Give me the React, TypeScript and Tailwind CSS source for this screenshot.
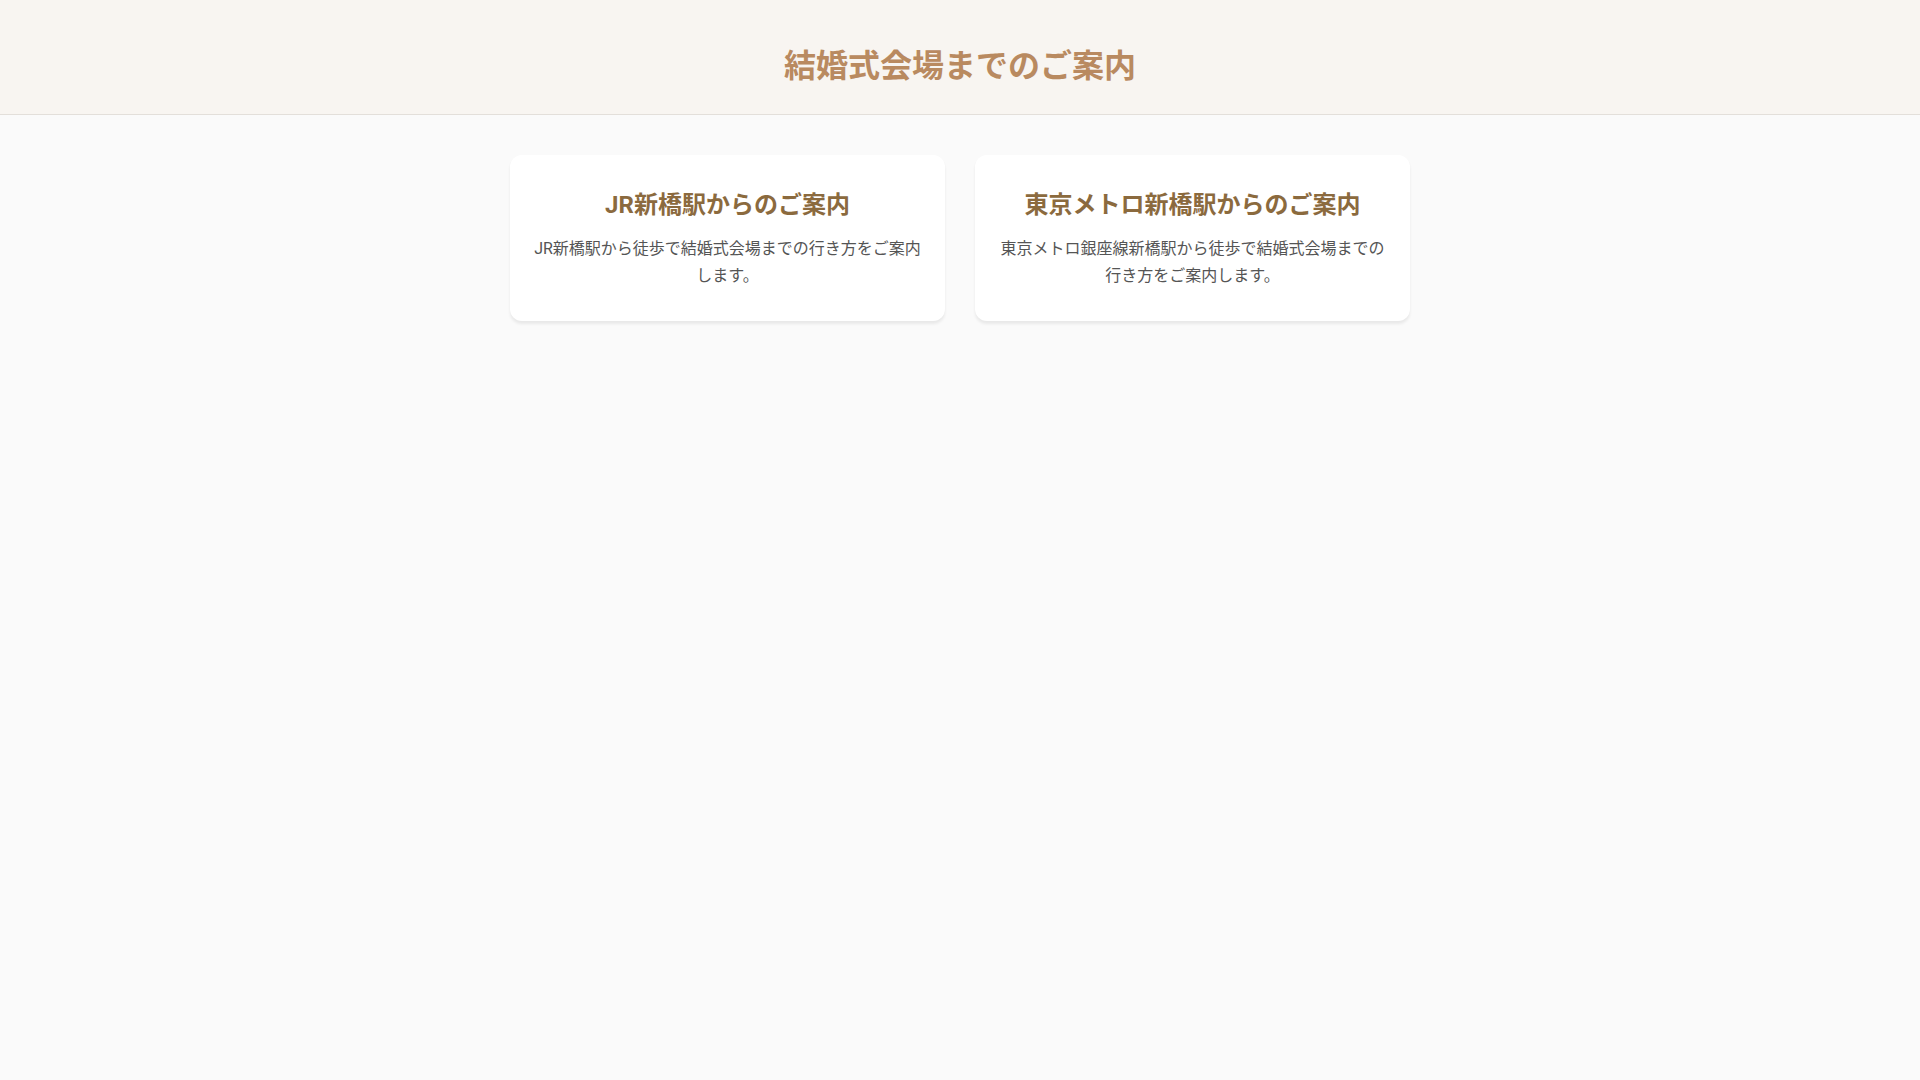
const routes = [
  {
    id: 'jr',
    title: 'JR新橋駅からのご案内',
    text: 'JR新橋駅から徒歩で結婚式会場までの行き方をご案内します。',
  },
  {
    id: 'metro',
    title: '東京メトロ新橋駅からのご案内',
    text: '東京メトロ銀座線新橋駅から徒歩で結婚式会場までの行き方をご案内します。',
  },
];

const App = () => {
  return (
    <div className="min-h-screen bg-[#fafafa] font-['Roboto','Noto_Sans_CJK_JP',sans-serif]">
      <header className="bg-[#f8f5f1] border-b border-[#e3dfda] pt-[42px] pb-[24px] text-center">
        <h1 className="text-[32px] leading-[48px] font-bold text-[#b98a60]">結婚式会場までのご案内</h1>
      </header>

      <main className="pt-[40px] px-4">
        <div className="max-w-[900px] mx-auto grid grid-cols-2 gap-[30px]">
          {routes.map((route) => (
            <div
              key={route.id}
              className="bg-white rounded-xl px-6 py-8 text-center shadow-[0_3px_3px_rgba(0,0,0,0.07)]"
            >
              <h2 className="text-2xl leading-9 font-bold text-[#8b6a3e] mb-3">{route.title}</h2>
              <p className="text-base leading-[27px] text-[#555555]">{route.text}</p>
            </div>
          ))}
        </div>
      </main>
    </div>
  );
};

export default App;
